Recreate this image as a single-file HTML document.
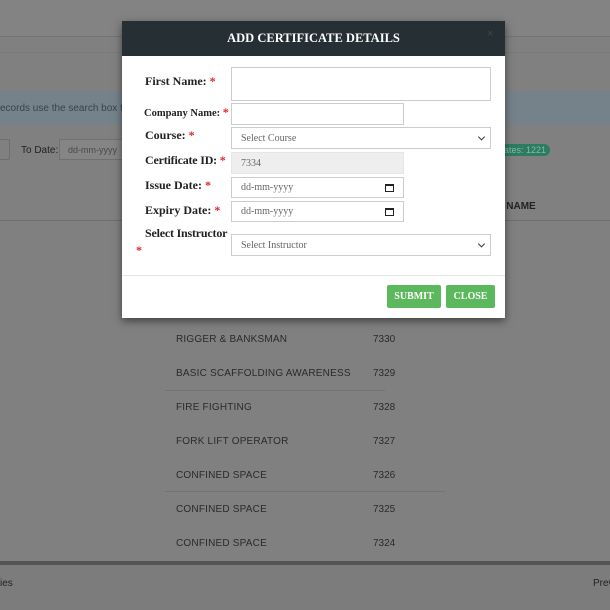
<!DOCTYPE html>
<html><head><style>
*{box-sizing:border-box;margin:0;padding:0}
html,body{background:#808080}
body{width:610px;height:610px;position:relative;overflow:hidden;font-family:"Liberation Sans",sans-serif;white-space:nowrap}
.abs{position:absolute}
.lbl{position:absolute;font-family:"Liberation Serif",serif;font-weight:bold;font-size:12px;color:#222}
.lbl b{color:#e0282c}
.inp{position:absolute;border:1px solid #ccc;background:#fff;font-family:"Liberation Serif",serif;font-size:10px;color:#666;padding-left:9px;display:flex;align-items:center}
.row{position:absolute;left:176px;font-size:10px;color:#2a2a2a;letter-spacing:.2px}
.num{position:absolute;left:373px;font-size:10px;color:#2a2a2a}
.line{position:absolute;height:1px;background:#747474}
.btn{position:absolute;background:#5cb85c;color:#fff;font-family:"Liberation Serif",serif;font-weight:bold;font-size:10px;display:flex;align-items:center;justify-content:center;border-radius:2px}
.car{position:absolute;right:6px;top:50%;width:5px;height:5px;border-right:1px solid #333;border-bottom:1px solid #333;transform:translateY(-70%) rotate(45deg)}
.cal{position:absolute;right:9px;top:50%;width:9px;height:8px;border:1px solid #222;border-top-width:2px;transform:translateY(-50%)}
</style></head><body>
<div class="abs" style="left:0;top:0;width:610px;height:610px;background:#808080"></div>
<div class="abs" style="left:0;top:0;width:610px;height:36px;background:#838383"></div>
<div class="line" style="left:0;top:36px;width:610px"></div>
<div class="line" style="left:0;top:52px;width:610px;background:#7a7a7a"></div>
<div class="abs" style="left:0;top:91px;width:610px;height:34px;background:#76828a"></div>
<div class="abs" style="left:0;top:103px;font-size:10px;color:#34444f">ecords use the search box to</div>
<div class="abs" style="left:-5px;top:139px;width:15px;height:21px;border:1px solid #6e6e6e;border-radius:2px"></div>
<div class="abs" style="left:21px;top:145px;font-size:10px;color:#222">To Date:</div>
<div class="abs" style="left:59px;top:139px;width:64px;height:21px;border:1px solid #707070;background:#858585;font-size:9px;color:#4a4a4a;padding:5px 8px">dd-mm-yyyy</div>
<div class="abs" style="left:500px;top:144px;width:50px;height:12px;background:#2f7a62;border-radius:6px;font-size:9px;color:#7fbfa7;padding-left:4px;line-height:12px">ates: 1221</div>
<div class="abs" style="left:497px;top:201px;font-size:10px;color:#222;font-weight:bold">Y NAME</div>
<div class="line" style="left:0;top:220px;width:610px;background:#6e6e6e"></div>
<div class="row" style="top:334px">RIGGER &amp; BANKSMAN</div><div class="num" style="top:334px">7330</div>
<div class="row" style="top:368px">BASIC SCAFFOLDING AWARENESS</div><div class="num" style="top:368px">7329</div>
<div class="line" style="left:165px;top:390px;width:220px"></div>
<div class="row" style="top:402px">FIRE FIGHTING</div><div class="num" style="top:402px">7328</div>
<div class="row" style="top:436px">FORK LIFT OPERATOR</div><div class="num" style="top:436px">7327</div>
<div class="row" style="top:470px">CONFINED SPACE</div><div class="num" style="top:470px">7326</div>
<div class="line" style="left:165px;top:491px;width:280px"></div>
<div class="row" style="top:504px">CONFINED SPACE</div><div class="num" style="top:504px">7325</div>
<div class="row" style="top:538px">CONFINED SPACE</div><div class="num" style="top:538px">7324</div>
<div class="abs" style="left:0;top:561px;width:610px;height:4px;background:#555"></div>
<div class="abs" style="left:0;top:565px;width:610px;height:45px;background:#7c7c7c"></div>
<div class="abs" style="left:0;top:578px;font-size:10px;color:#222">ies</div>
<div class="abs" style="left:593px;top:578px;font-size:10px;color:#222">Prev</div>

<div class="abs" style="left:122px;top:21px;width:383px;height:297px;background:#fff;box-shadow:0 3px 8px rgba(0,0,0,.5)"></div>
<div class="abs" style="left:122px;top:21px;width:383px;height:35px;background:#263034;color:#fff;font-family:'Liberation Serif',serif;font-weight:bold;font-size:12.5px;text-align:center;line-height:35px">ADD CERTIFICATE DETAILS</div>
<div class="abs" style="left:487px;top:28px;color:#444;font-size:11px">×</div>

<div class="lbl" style="left:145px;top:74px">First Name: <b>*</b></div>
<div class="inp" style="left:231px;top:67px;width:260px;height:34px"></div>
<div class="lbl" style="left:144px;top:105px;font-size:10.5px">Company Name: <b style="font-size:12px">*</b></div>
<div class="inp" style="left:231px;top:103px;width:173px;height:22px"></div>
<div class="lbl" style="left:145px;top:128px">Course: <b>*</b></div>
<div class="inp" style="left:231px;top:127px;width:260px;height:22px">Select Course<span class="car"></span></div>
<div class="lbl" style="left:145px;top:153px;letter-spacing:-.2px">Certificate ID: <b>*</b></div>
<div class="inp" style="left:231px;top:152px;width:173px;height:22px;background:#eee;border-color:#e6e6e6">7334</div>
<div class="lbl" style="left:145px;top:178px">Issue Date: <b>*</b></div>
<div class="inp" style="left:231px;top:177px;width:173px;height:21px">dd-mm-yyyy<span class="cal"></span></div>
<div class="lbl" style="left:145px;top:203px">Expiry Date: <b>*</b></div>
<div class="inp" style="left:231px;top:201px;width:173px;height:21px">dd-mm-yyyy<span class="cal"></span></div>
<div class="lbl" style="left:145px;top:226px;letter-spacing:-.2px">Select Instructor</div>
<div class="lbl" style="left:136px;top:243px"><b>*</b></div>
<div class="inp" style="left:231px;top:234px;width:260px;height:22px">Select Instructor<span class="car"></span></div>
<div class="line" style="left:122px;top:275px;width:383px;background:#e5e5e5"></div>
<div class="btn" style="left:387px;top:285px;width:54px;height:23px">SUBMIT</div>
<div class="btn" style="left:446px;top:285px;width:49px;height:23px">CLOSE</div>
</body></html>
